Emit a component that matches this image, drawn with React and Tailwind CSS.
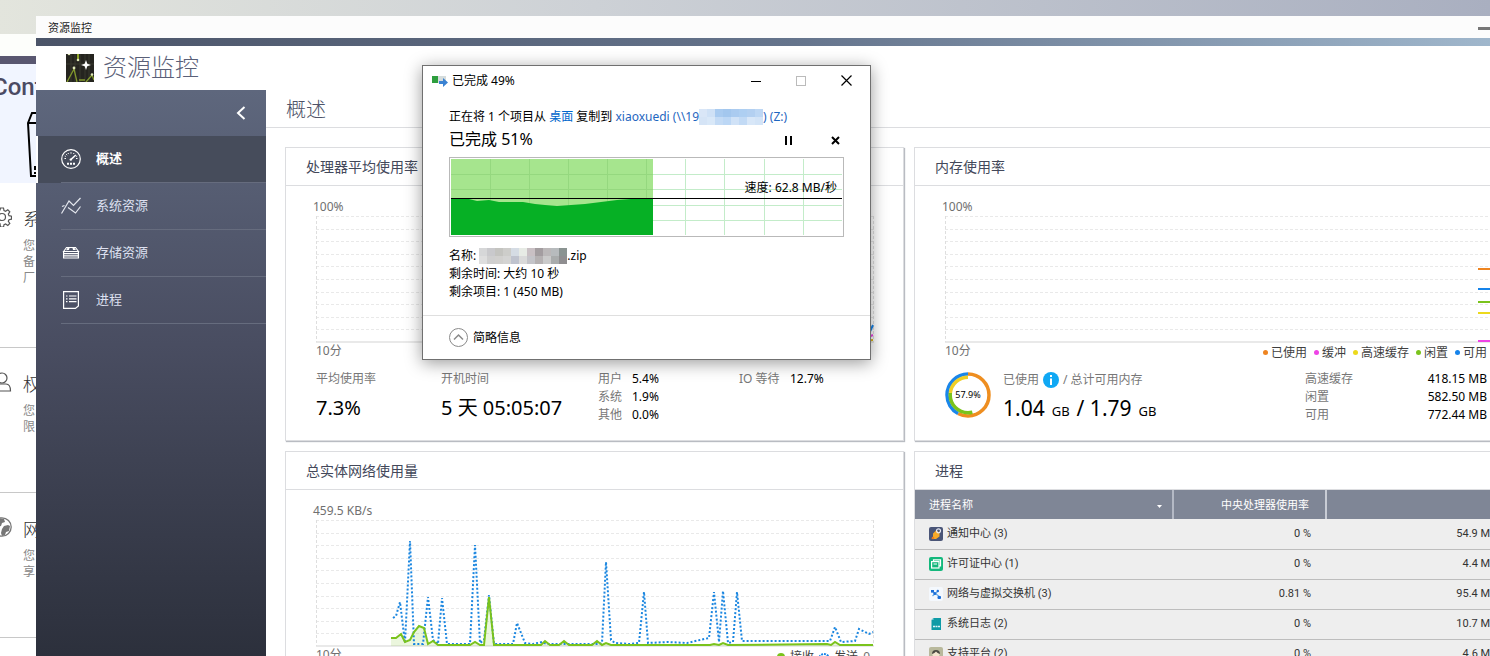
import React, { useState } from "react";
import clsx from "clsx";

const GridRows = [0, 12.6, 25.2, 37.8, 50.4, 63, 75.6, 88.2, 100.8, 113.4];

const SentPoints =
  "77,98 80,96 84,82 89,123 94,21 98,124 107,124 112,77 117,120 122,124 126,78 131,124 154,124 159,25 164,123 168,120 173,75 178,124 197,124 201,103 209,123 217,124 226,122 231,124 283,124 286,123 290,42 295,120 299,123 314,124 323,123 328,72 332,123 352,122 371,123 384,120 393,118 398,72 403,122 407,71 412,123 417,122 421,72 426,121 434,121 514,121 519,107 525,122 539,121 543,109 553,114 557,112";
const ReceivedPoints =
  "75,118 80,118 85,114 89,122 94,120 98,112 103,106 108,108 112,124 117,121 122,125 154,125 159,122 164,125 168,125 173,77 178,125 225,125 229,121 234,125 243,125 248,121 253,125 276,125 281,121 286,125 290,123 295,125 394,125 398,124 403,125 407,123 412,125 511,124 515,125 519,122 524,125 557,125";

const MemoryLegend = [
  { label: "已使用", dot: "bg-[#ee8420]" },
  { label: "缓冲", dot: "bg-[#ee44e6]" },
  { label: "高速缓存", dot: "bg-[#ecd91c]" },
  { label: "闲置", dot: "bg-[#7ac31c]" },
  { label: "可用", dot: "bg-[#1583ea]" }
];

const MemoryLines = [
  { y: 53, color: "#ee8420" },
  { y: 73, color: "#1583ea" },
  { y: 86, color: "#7ac31c" },
  { y: 97, color: "#ecd91c" },
  { y: 125, color: "#ee44e6" }
];

const MemoryStats = [
  ["高速缓存", "418.15 MB"],
  ["闲置", "582.50 MB"],
  ["可用", "772.44 MB"]
];

const Processes = [
  { name: "通知中心 (3)", cpu: "0 %", memory: "54.9 MB", Icon: NotificationIcon },
  { name: "许可证中心 (1)", cpu: "0 %", memory: "4.4 MB", Icon: LicenseIcon },
  { name: "网络与虚拟交换机 (3)", cpu: "0.81 %", memory: "95.4 MB", Icon: SwitchIcon },
  { name: "系统日志 (2)", cpu: "0 %", memory: "10.7 MB", Icon: LogIcon },
  { name: "支持平台 (2)", cpu: "0 %", memory: "4.6 MB", Icon: SupportIcon }
];

const MenuItems = [
  { label: "概述", Icon: GaugeIcon },
  { label: "系统资源", Icon: LinesIcon },
  { label: "存储资源", Icon: DiskIcon },
  { label: "进程", Icon: ListIcon }
];

const SettingsGroups = [
  { title: "系", lines: ["您", "备", "厂"], Icon: GearIcon },
  { title: "权", lines: ["您", "限"], Icon: PersonIcon },
  { title: "网", lines: ["您", "享"], Icon: GlobeIcon }
];

function NotificationIcon() {
  return (
    <svg className="size-[14px]" viewBox="0 0 14 14">
      <rect width="14" height="14" rx="2" fill="#4a5577" />
      <path d="M4 6.500 7.500 3l3 3.500v3L7 12H2.500L4 10z" fill="#f7a928" />
      <circle cx="4" cy="11" r="1.300" fill="#ee7d1a" />
      <circle cx="9.500" cy="3.800" r="2" fill="none" stroke="#e8eaf2" strokeWidth="1.200" />
    </svg>
  );
}

function LicenseIcon() {
  return (
    <svg className="size-[14px]" viewBox="0 0 14 14">
      <rect width="14" height="14" rx="2" fill="#14b87c" />
      <path d="M4.500 4V2.800h7v6H10" fill="none" stroke="#fff" strokeWidth="1.200" />
      <rect x="2.600" y="4.600" width="7.400" height="6.400" fill="none" stroke="#fff" strokeWidth="1.200" />
      <path d="M4.500 7h3.500" stroke="#fff" />
    </svg>
  );
}

function SwitchIcon() {
  return (
    <svg className="size-[14px]" viewBox="0 0 14 14">
      <rect width="14" height="14" rx="2" fill="#f4f8fd" />
      <path d="m3 4 8 6M3.500 9 9 4" stroke="#62a8e8" strokeWidth="1.200" />
      <rect x="2" y="3" width="3" height="2.600" fill="#1d6fd8" />
      <circle cx="8.800" cy="4" r="1.200" fill="#1d6fd8" />
      <circle cx="5.800" cy="6.500" r="1.500" fill="#1d6fd8" />
      <rect x="8.500" y="9" width="3.500" height="3" rx="1" fill="#1d6fd8" />
    </svg>
  );
}

function LogIcon() {
  return (
    <svg className="size-[14px]" viewBox="0 0 14 14">
      <path d="M4.500 1H12v12H2.500V3z" fill="#0f9ba6" />
      <path d="M4.500 1v2h-2z" fill="#7fd0d6" />
      <path d="M4 9.500h2M6.500 9.500h2M9 9.500h2" stroke="#d9f3f5" strokeWidth="1.500" />
    </svg>
  );
}

function SupportIcon() {
  return (
    <svg className="size-[14px]" viewBox="0 0 14 14">
      <rect width="14" height="14" rx="2" fill="#b9b99c" />
      <circle cx="7" cy="7" r="3.600" fill="#f3e6cf" />
      <path d="M3 7a4 4 0 0 1 8 0c-2-.5-3-1.500-4-2.500C6 5.500 5 6.500 3 7z" fill="#4b4a42" />
      <path d="M3 14c0-5 8-5 8 0z" fill="#6f7562" />
    </svg>
  );
}

function GaugeIcon() {
  return (
    <svg className="size-5" viewBox="0 0 20 20" fill="none" stroke="#fff">
      <circle cx="10" cy="10" r="9.300" strokeWidth="1.200" />
      <path d="M3.500 9.500h1.500M15 9.500h1.500M5.200 5.200l1 1M10 3.200v1.500M7 4l.5 1M13 4l-.5 1M3.800 7l1 .4M16.200 7l-1 .4" />
      <path d="m9.800 10.600 5-4.600" strokeWidth="1.500" />
      <circle cx="9.800" cy="10.600" r="1.200" fill="#fff" stroke="none" />
      <path d="M6 14.800h2M9 14.800h2M12 14.800h2" strokeWidth="2" />
    </svg>
  );
}

function LinesIcon() {
  return (
    <svg className="size-5" viewBox="0 0 20 20" fill="none" stroke="#e4e7ee" strokeWidth="1.200">
      <path d="M.5 17.500 8 5l4.500 4.500L19.500 2" />
      <path d="m1 10.500 2.500-1M7 11.500l7.500 5.500 5-6.500" />
    </svg>
  );
}

function DiskIcon() {
  return (
    <svg className="size-5" viewBox="0 0 20 20" fill="none" stroke="#fff" strokeWidth="1.200">
      <path d="m2.600 8.500 2.900-4h9l2.900 4z" />
      <path d="M5 7.300 6.500 5h2l-.5 2zM12 7h3l-1.500-2h-2z" fill="#fff" stroke="none" />
      <path d="M2.600 8.500h14.800V15H2.600zM2.600 10.700h14.800M2.600 12.800h14.800" />
    </svg>
  );
}

function ListIcon() {
  return (
    <svg className="size-5" viewBox="0 0 20 20" fill="none" stroke="#fff" strokeWidth="1.200">
      <path d="M2.600 1.600h14.800v14.300l-3 2.500H2.600z" />
      <path d="M5 6h1.500M8 6h7.500M5 8.800h1.500M8 8.800h7.500M5 11.600h1.500M8 11.600h7.500" />
    </svg>
  );
}

function GearIcon() {
  return (
    <svg className="size-5" viewBox="0 0 20 20" fill="none" stroke="#555" strokeWidth="1.200">
      <circle cx="10" cy="10" r="3.500" />
      <path d="M8.500 1h3l.5 2.600 1.600.7 2.200-1.500 2 2-1.500 2.300.7 1.600 2.500.5v3l-2.500.5-.7 1.600 1.500 2.200-2 2-2.200-1.500-1.600.7-.5 2.500h-3L8 16.700l-1.600-.7-2.200 1.500-2-2 1.500-2.200-.7-1.600L.5 11V8.500L3 8l.7-1.600L2.200 4l2-2 2.200 1.500L8 3z" />
    </svg>
  );
}

function PersonIcon() {
  return (
    <svg className="size-5" viewBox="0 0 20 20" fill="none" stroke="#555" strokeWidth="1.200">
      <circle cx="10" cy="6" r="5" />
      <path d="M1 19c0-5 2.500-7 5-7h8c2.500 0 4.500 2 4.500 7z" />
    </svg>
  );
}

function GlobeIcon() {
  return (
    <svg className="size-5" viewBox="0 0 20 20">
      <circle cx="10" cy="10" r="9.200" fill="#fff" stroke="#777" strokeWidth="1.300" />
      <path d="M3 4c3-3 7-3 9-2l1 3-3 1-1 3-4 1-3-1zM10 12l2-3 4-1 2 1-1 5-3 1-1 3-3 1-1-3z" fill="#777" />
    </svg>
  );
}

function MonitorLogo() {
  return (
    <svg className="size-7" viewBox="0 0 28 28">
      <rect width="28" height="28" fill="#25241f" />
      <path d="M5 0v28M9 0v28M14 0v28M19 0v28M23 0v28M0 10h28" stroke="#38382f" />
      <path d="M12 0v6" stroke="#8ea52c" strokeWidth="2" />
      <path d="M1 28 8 15l3 13M13 26h6M20 28l6-7 2 5" fill="none" stroke="#82992c" strokeWidth="1.300" />
      <path d="m20 6 1.300 3.700L25 11l-3.700 1.300L20 16l-1.300-3.700L15 11l3.700-1.300z" fill="#fff" />
      <circle cx="8" cy="14" r="1.400" fill="#dfe8b8" />
      <circle cx="12" cy="6" r="1.300" fill="#dfe8b8" />
      <circle cx="26" cy="20.500" r="1.300" fill="#dfe8b8" />
      <circle cx="3" cy="0" r="1.300" fill="#dfe8b8" />
    </svg>
  );
}

function SettingsWindow() {
  return (
    <div className="absolute -left-2 top-[34px] bottom-0 w-3/5 bg-white">
      <div className="h-[22px] bg-[#fdfefb]" />
      <div className="h-2 bg-[#595770]" />
      <div className="h-[119px] bg-[#f1f5ff] pt-[7px]">
        <div className="font-[Roboto,sans-serif] text-2xl leading-8 font-medium text-[#4b4a63]">Cont</div>
        <svg className="mt-2 ml-[34px] h-[68px] w-[60px]" viewBox="0 0 60 68" fill="none" stroke="#000" strokeWidth="2">
          <path d="M2 12 6 2h48l5 10-4 53H5zM2 12h58M9 55v4M8 62h2" />
        </svg>
      </div>
      {SettingsGroups.map(({ title, lines, Icon }, i) => (
        <div
          key={title}
          className={clsx("flex items-start border-b border-[#c8c8c8] pt-6", i === 0 ? "h-[165px]" : "h-[145px]")}
        >
          <Icon />
          <div className="ml-[11px]">
            <div className="text-[18px] leading-6 font-light text-[#333]">{title}</div>
            <div className="pt-[7px] text-xs leading-4 text-[#888]">
              {lines.map(line => (
                <div key={line}>{line}</div>
              ))}
            </div>
          </div>
        </div>
      ))}
    </div>
  );
}

function Sidebar() {
  const [active, setActive] = useState("概述");

  return (
    <nav className="w-[230px] shrink-0 bg-linear-to-b from-[#5e677d] via-[#494d61] via-45% to-[#2c303c]">
      <div className="flex h-[46px] items-center justify-end pr-5">
        <button aria-label="收起">
          <svg className="h-[14px] w-[10px]" viewBox="0 0 10 14" fill="none" stroke="#fff" strokeWidth="2">
            <path d="M8.500 1 2 7l6.500 6" />
          </svg>
        </button>
      </div>
      {MenuItems.map(({ label, Icon }) => (
        <button
          key={label}
          onClick={() => setActive(label)}
          className={clsx(
            "block w-full border-l-2 pl-[23px] text-left text-[13px]",
            active === label
              ? "border-white bg-[#464c5b] font-bold text-white"
              : "border-transparent text-[#dde0f0]"
          )}
        >
          <span className="flex h-[47px] items-center gap-[15px] border-b border-[#666c7e]">
            <Icon />
            {label}
          </span>
        </button>
      ))}
    </nav>
  );
}

function Card({ title, children }) {
  return (
    <section className="border border-[#dcdde0] bg-white shadow-[1px_1px_1px_#b9bcc2]">
      <h2 className="flex h-[38px] items-center border-b border-[#dcdde0] pl-5 text-sm text-[#43485a]">{title}</h2>
      {children}
    </section>
  );
}

function Chart({ top, legend, children }) {
  return (
    <div className="text-xs text-[#707070]">
      <div className="leading-[18px]">{top}</div>
      <div className="px-[3px]">
        <svg className="h-[127px] w-full" viewBox="0 0 558 127" preserveAspectRatio="none">
          {GridRows.map(y => (
            <path key={y} d={`M0 ${Math.round(y) + 0.5}H558`} stroke="#e9e9e9" strokeDasharray="3 2" />
          ))}
          <path d="M.5 0v126M557.500 0v126" stroke="#dedede" strokeDasharray="3 2" />
          <path d="M0 126h558" stroke="#e2e2e2" strokeWidth="1.500" />
          {children}
        </svg>
        <div className="flex h-4 justify-between leading-4">
          <span>10分</span>
          {legend}
        </div>
      </div>
    </div>
  );
}

function CpuCard() {
  return (
    <Card title="处理器平均使用率">
      <div className="py-3 pr-[26px] pl-[27px]">
        <Chart top="100%">
          <path d="M545 122 552 120 557 109" stroke="#1583ea" strokeWidth="2" fill="none" />
          <path d="M545 124 557 119" stroke="#ee44e6" strokeWidth="2" />
          <path d="M545 125 557 124" stroke="#d9b51c" strokeWidth="2" />
        </Chart>
        <div className="mt-[11px] flex px-[3px] text-xs leading-[18px] text-[#777]">
          <div className="w-[125px]">
            <div>平均使用率</div>
            <div className="text-xl leading-10 text-black">7.3%</div>
          </div>
          <div className="w-[157px]">
            <div>开机时间</div>
            <div className="text-xl leading-10 text-black">5 天 05:05:07</div>
          </div>
          <dl className="grid grid-cols-[34px_107px_51px_auto] content-start">
            <dt>用户</dt>
            <dd className="text-black">5.4%</dd>
            <dt>IO 等待</dt>
            <dd className="text-black">12.7%</dd>
            <dt>系统</dt>
            <dd className="col-span-3 text-black">1.9%</dd>
            <dt>其他</dt>
            <dd className="col-span-3 text-black">0.0%</dd>
          </dl>
        </div>
      </div>
    </Card>
  );
}

function MemoryRing() {
  return (
    <svg className="size-[46px]" viewBox="0 0 46 46" fill="none">
      <g transform="rotate(-90 23 23)" strokeWidth="3.500">
        <circle cx="23" cy="23" r="21" pathLength="100" stroke="#ee8e20" strokeDasharray="57.9 100" />
        <circle cx="23" cy="23" r="21" pathLength="100" stroke="#1a86ea" strokeDasharray="42.1 100" strokeDashoffset="-57.9" />
        <circle cx="23" cy="23" r="17.800" pathLength="100" stroke="#7ac31c" strokeDasharray="31 100" strokeDashoffset="-46" />
        <circle cx="23" cy="23" r="17.800" pathLength="100" stroke="#f0cf26" strokeDasharray="23 100" strokeDashoffset="-77" />
      </g>
      <text x="23" y="26" textAnchor="middle" fontSize="9" fill="#000">
        57.9%
      </text>
    </svg>
  );
}

function MemoryCard() {
  const legend = (
    <ul className="flex gap-[7px] pt-[3px] pr-4 text-[#3f3f3f]">
      {MemoryLegend.map(({ label, dot }) => (
        <li key={label} className="flex items-center gap-[3px]">
          <i className={clsx("size-[5px] rounded-full", dot)} />
          {label}
        </li>
      ))}
    </ul>
  );

  return (
    <Card title="内存使用率">
      <div className="py-3 pr-[26px] pl-[27px]">
        <Chart top="100%" legend={legend}>
          {MemoryLines.map(({ y, color }) => (
            <path key={y} d={`M533 ${y}H558`} stroke={color} strokeWidth="2" />
          ))}
        </Chart>
        <div className="mt-[11px] flex px-[3px] text-xs leading-[18px] text-[#777]">
          <div className="pt-[2px]">
            <MemoryRing />
          </div>
          <div className="ml-3">
            <div className="flex h-5 items-center gap-1">
              已使用
              <svg className="size-4" viewBox="0 0 16 16">
                <circle cx="8" cy="8" r="8" fill="#10a8f4" />
                <path d="M8 3v2M8 6.500V13" stroke="#fff" strokeWidth="2" />
              </svg>
              / 总计可用内存
            </div>
            <div className="flex h-[38px] items-baseline gap-[7px] text-[21px] leading-9 text-black">
              1.04 <small className="text-[13px] leading-none">GB</small> / 1.79{" "}
              <small className="text-[13px] leading-none">GB</small>
            </div>
          </div>
          <dl className="mr-4 ml-auto w-[182px]">
            {MemoryStats.map(([label, value]) => (
              <div key={label} className="flex justify-between">
                <dt>{label}</dt>
                <dd className="text-black">{value}</dd>
              </div>
            ))}
          </dl>
        </div>
      </div>
    </Card>
  );
}

function NetworkCard() {
  const legend = (
    <div className="flex items-center gap-[5px] pt-[3px] text-[#3f3f3f]">
      <i className="size-2 rounded-full bg-[#7ac31c]" />
      接收
      <svg className="h-2 w-[10px]" viewBox="0 0 10 8">
        <path d="M0 4q5-6 10 0" fill="none" stroke="#1583ea" strokeWidth="2" strokeDasharray="2 1" />
      </svg>
      发送
      <span className="pr-1 text-[#707070]">0</span>
    </div>
  );

  return (
    <Card title="总实体网络使用量">
      <div className="py-3 pr-[26px] pl-[27px]">
        <Chart top="459.5 KB/s" legend={legend}>
          <polygon points={`75,126 ${ReceivedPoints} 557,126`} fill="#7ac31c" fillOpacity="0.15" />
          <polyline points={SentPoints} fill="none" stroke="#1a86e0" strokeWidth="2" strokeDasharray="2 2" />
          <polyline points={ReceivedPoints} fill="none" stroke="#7ac31c" strokeWidth="2" />
        </Chart>
      </div>
    </Card>
  );
}

function ProcessCard() {
  return (
    <Card title="进程">
      <table className="w-full table-fixed font-[Roboto,'Noto_Sans_CJK_SC',sans-serif] text-[11px] text-[#333]">
        <thead className="bg-[#7f8696] text-white">
          <tr className="h-[29px]">
            <th className="w-[258px] border-r-2 border-[#b4b9c5] pt-1 pr-[10px] pl-[14px] text-left font-normal">
              <span className="flex items-center justify-between">
                进程名称
                <svg className="h-1 w-[5px]" viewBox="0 0 5 4">
                  <path d="M0 0h5L2.500 3z" fill="#fff" />
                </svg>
              </span>
            </th>
            <th className="w-[153px] border-r-2 border-[#c8ccd5] pt-1 pr-4 text-right font-normal">中央处理器使用率</th>
            <th />
          </tr>
        </thead>
        <tbody>
          {Processes.map(({ name, cpu, memory, Icon }) => (
            <tr key={name} className="h-[30px] border-b border-[#bdbdbd] bg-[#eee]">
              <td className="pl-[14px]">
                <span className="flex items-center gap-1">
                  <Icon />
                  {name}
                </span>
              </td>
              <td className="pr-[15px] text-right">{cpu}</td>
              <td className="pr-[35px] text-right">{memory}</td>
            </tr>
          ))}
        </tbody>
      </table>
    </Card>
  );
}

function MonitorWindow() {
  return (
    <div className="absolute top-4 -right-16 bottom-0 left-9 flex flex-col overflow-hidden bg-white">
      <div className="flex h-[22px] shrink-0 items-center justify-between bg-[#fcfcfc] pt-[2px] pr-[18px] pl-3 text-[11px] text-[#222]">
        资源监控
        <div className="flex items-center gap-2">
          <button aria-label="最小化" className="h-[3px] w-[14px] bg-[#777]" />
          <button aria-label="最大化" className="h-3 w-[14px] border-2 border-[#777]" />
          <button aria-label="关闭">
            <svg className="size-[14px]" viewBox="0 0 14 14">
              <path d="m2 2 10 10M12 2 2 12" stroke="#777" strokeWidth="3" />
            </svg>
          </button>
        </div>
      </div>
      <div className="h-2 shrink-0 bg-linear-to-r from-[#4b5468] via-[#65748c] to-[#a5bdd2]" />
      <header className="flex h-[44px] shrink-0 items-center gap-[9px] pl-[30px]">
        <MonitorLogo />
        <h1 className="pb-[2px] text-2xl leading-8 font-light text-[#5a6078]">资源监控</h1>
      </header>
      <div className="flex min-h-0 grow">
        <Sidebar />
        <main className="grow">
          <h2 className="flex h-[38px] items-center border-b border-[#dcdde0] pt-[2px] pl-5 text-[20px] font-light text-[#4d5368]">
            概述
          </h2>
          <div className="grid grid-cols-2 gap-[10px] pt-[19px] pr-[21px] pl-[19px]">
            <CpuCard />
            <MemoryCard />
            <NetworkCard />
            <ProcessCard />
          </div>
        </main>
      </div>
    </div>
  );
}

function Mosaic({ colors }) {
  return (
    <span className="inline-grid grid-flow-col grid-rows-2 align-middle">
      {colors.map((color, i) => (
        <i key={i} className="size-2" style={{ background: color }} />
      ))}
    </span>
  );
}

const AddressTiles = [
  "#d9e6f7", "#d5e4f6", "#cfe1f6", "#d9e8f8", "#a9cbf0", "#c4dbf5", "#a3c7ee", "#bcd7f5",
  "#aacbf0", "#d0e2f7", "#aecff2", "#c2daf5", "#b3d0f1", "#d8e7f8", "#bdd7f4", "#d3e4f7"
];

const NameTiles = [
  "#d6d7d8", "#dedede", "#c9c9cc", "#cfcfcf", "#c4c4c0", "#d1d0ce", "#cdcdca", "#d4d4d3",
  "#d5dce4", "#bfc3ce", "#e7ebe5", "#dadada", "#c9c0c4", "#c4c4c9", "#a39da0", "#b5b1b2",
  "#bbb8b9", "#cacaca", "#b7bbbd", "#a9acac", "#8a9391", "#8f8e90"
];

function SpeedGraph() {
  return (
    <div className="relative border border-[#b9b9b9] p-px">
      <svg className="block h-[76px] w-full" viewBox="0 0 391 76" preserveAspectRatio="none">
        <path
          d="M39.500 0v77M78.500 0v77M117.500 0v77M156.500 0v77M195.500 0v77M234.500 0v77M273.500 0v77M313.500 0v77M352.500 0v77M0 15.500h391M0 30.500h391M0 46.500h391M0 61.500h391"
          stroke="#c3ecc9"
        />
        <rect width="202" height="77" fill="#a6e58e" />
        <path
          d="M39.500 0v77M78.500 0v77M117.500 0v77M156.500 0v77M195.500 0v77M0 15.500h202M0 30.500h202"
          stroke="#95d87f"
        />
        <path d="M0 40h18l8 2 12-1 10 2h24l12 2 10 1 12 1 14-1 14-1 16-2 16-2 14-1h22v37H0z" fill="#06b025" />
        <path d="M0 39.500h391" stroke="#000" />
      </svg>
      <div className="absolute top-5 right-[6px] text-xs leading-5">速度: 62.8 MB/秒</div>
    </div>
  );
}

function CopyDialog() {
  return (
    <div
      role="dialog"
      className="absolute top-[65px] left-[422px] w-[449px] border border-[#707070] bg-white text-xs text-black shadow-[0_3px_16px_rgba(0,0,0,0.4)]"
    >
      <div className="flex h-[29px] items-center pr-[18px] pl-[9px]">
        <svg className="h-4 w-4" viewBox="0 0 16 16">
          <rect y="3" width="14" height="7" fill="#d5dcdc" />
          <rect y="3" width="6" height="7" fill="#2e9e3e" />
          <path d="M7 8h4V5l5 4.500-5 4.500v-3H7z" fill="#3a82d2" />
        </svg>
        <span className="ml-1 grow">已完成 49%</span>
        <div className="flex items-center gap-[35px]">
          <button aria-label="最小化">
            <svg className="h-3 w-[10px]" viewBox="0 0 10 12">
              <path d="M0 6.500h10" stroke="#000" />
            </svg>
          </button>
          <button aria-label="最大化" className="size-[10px] border border-[#bbb]" disabled />
          <button aria-label="关闭">
            <svg className="size-[11px]" viewBox="0 0 11 11">
              <path d="m.5.5 10 10M10.500.5l-10 10" stroke="#000" strokeWidth="1.200" />
            </svg>
          </button>
        </div>
      </div>
      <div className="px-[26px] pt-[13px]">
        <p className="flex items-center leading-[18px] whitespace-pre">
          正在将 1 个项目从 <a href="#desktop" className="text-[#0066cc]">桌面</a> 复制到{" "}
          <a href="#target" className="flex items-center text-[#1f66c0]">
            xiaoxuedi (\\19
            <Mosaic colors={AddressTiles} />) (Z:)
          </a>
        </p>
        <div className="flex h-[31px] items-start justify-between pr-1">
          <div className="text-base leading-[26px]">已完成 51%</div>
          <div className="flex h-7 items-center gap-[38px]">
            <button aria-label="暂停">
              <svg className="size-[9px]" viewBox="0 0 9 9">
                <path d="M2 0v9M7 0v9" stroke="#000" strokeWidth="2" />
              </svg>
            </button>
            <button aria-label="取消">
              <svg className="size-[9px]" viewBox="0 0 9 9">
                <path d="m1 1 7 7M8 1 1 8" stroke="#000" strokeWidth="2" />
              </svg>
            </button>
          </div>
        </div>
        <SpeedGraph />
        <div className="pt-[10px] pb-[14px] leading-[18px]">
          <div className="flex h-[18px] items-center whitespace-pre">
            名称: <Mosaic colors={NameTiles} />
            .zip
          </div>
          <div>剩余时间: 大约 10 秒</div>
          <div>剩余项目: 1 (450 MB)</div>
        </div>
      </div>
      <div className="flex h-11 items-center border-t border-[#dfdfdf] pl-[26px]">
        <button className="flex items-center gap-[5px]">
          <svg className="size-[19px]" viewBox="0 0 19 19" fill="none" stroke="#8a8a8a">
            <circle cx="9.500" cy="9.500" r="9" />
            <path d="m5 11.500 4.500-4.500 4.500 4.500" strokeWidth="1.500" />
          </svg>
          简略信息
        </button>
      </div>
    </div>
  );
}

export default function App() {
  return (
    <div className="relative h-screen overflow-hidden bg-linear-to-r from-[#e3e5dd] via-[#cdd1d6] via-40% to-[#a9afc0] font-['Noto_Sans','Noto_Sans_CJK_SC',sans-serif]">
      <SettingsWindow />
      <MonitorWindow />
      <CopyDialog />
    </div>
  );
}
